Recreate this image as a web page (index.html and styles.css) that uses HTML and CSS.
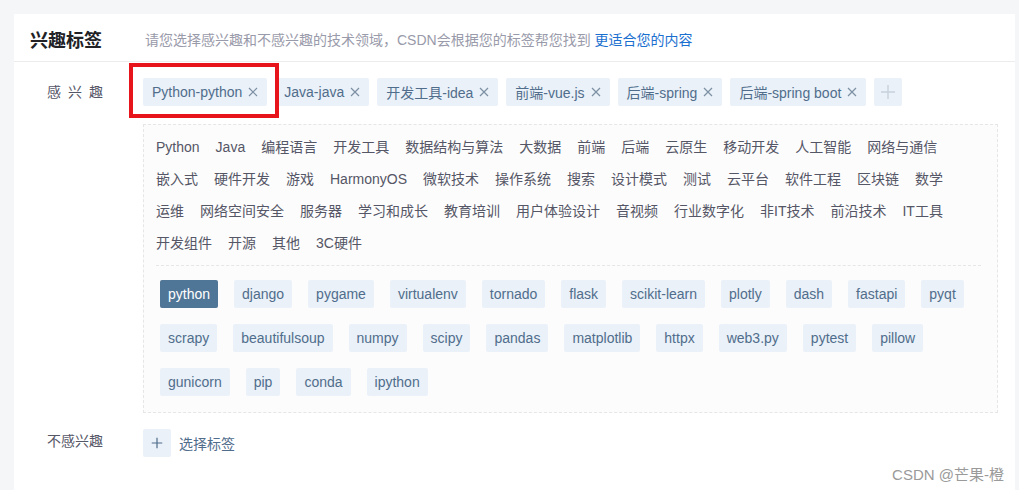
FILE: index.html
```html
<!DOCTYPE html>
<html lang="zh-CN">
<head>
    <meta charset="UTF-8">
    <meta name="viewport" content="width=device-width, initial-scale=1.0">
    <title>兴趣标签</title>
    <link rel="stylesheet" href="styles.css">
</head>
<body>
    <div class="card">
        <div class="card-header">
            <h2>兴趣标签</h2>
            <p class="desc">请您选择感兴趣和不感兴趣的技术领域，CSDN会根据您的标签帮您找到 <a href="#">更适合您的内容</a></p>
        </div>

        <div class="tag-row">
            <div class="row-label spaced">感兴趣</div>
            <div class="row-body">
                <div class="chosen-tags">
                    <span class="tag marked">Python-python <svg class="close" viewBox="0 0 10 10"><path d="M1 1L9 9M9 1L1 9"/></svg></span>
                    <span class="tag">Java-java <svg class="close" viewBox="0 0 10 10"><path d="M1 1L9 9M9 1L1 9"/></svg></span>
                    <span class="tag">开发工具-idea <svg class="close" viewBox="0 0 10 10"><path d="M1 1L9 9M9 1L1 9"/></svg></span>
                    <span class="tag">前端-vue.js <svg class="close" viewBox="0 0 10 10"><path d="M1 1L9 9M9 1L1 9"/></svg></span>
                    <span class="tag">后端-spring <svg class="close" viewBox="0 0 10 10"><path d="M1 1L9 9M9 1L1 9"/></svg></span>
                    <span class="tag">后端-spring boot <svg class="close" viewBox="0 0 10 10"><path d="M1 1L9 9M9 1L1 9"/></svg></span>
                    <span class="tag add-tag"><svg viewBox="0 0 16 16"><path d="M8 1V15M1 8H15"/></svg></span>
                </div>

                <div class="picker">
                    <div class="categories">
                        <span>Python</span><span>Java</span><span>编程语言</span><span>开发工具</span><span>数据结构与算法</span><span>大数据</span><span>前端</span><span>后端</span><span>云原生</span><span>移动开发</span><span>人工智能</span><span>网络与通信</span>
                        <span>嵌入式</span><span>硬件开发</span><span>游戏</span><span>HarmonyOS</span><span>微软技术</span><span>操作系统</span><span>搜索</span><span>设计模式</span><span>测试</span><span>云平台</span><span>软件工程</span><span>区块链</span><span>数学</span>
                        <span>运维</span><span>网络空间安全</span><span>服务器</span><span>学习和成长</span><span>教育培训</span><span>用户体验设计</span><span>音视频</span><span>行业数字化</span><span>非IT技术</span><span>前沿技术</span><span>IT工具</span>
                        <span>开发组件</span><span>开源</span><span>其他</span><span>3C硬件</span>
                    </div>
                    <div class="sub-tags">
                        <span class="sub active">python</span>
                        <span class="sub">django</span>
                        <span class="sub">pygame</span>
                        <span class="sub">virtualenv</span>
                        <span class="sub">tornado</span>
                        <span class="sub">flask</span>
                        <span class="sub">scikit-learn</span>
                        <span class="sub">plotly</span>
                        <span class="sub">dash</span>
                        <span class="sub">fastapi</span>
                        <span class="sub">pyqt</span>
                        <span class="sub">scrapy</span>
                        <span class="sub">beautifulsoup</span>
                        <span class="sub">numpy</span>
                        <span class="sub">scipy</span>
                        <span class="sub">pandas</span>
                        <span class="sub">matplotlib</span>
                        <span class="sub">httpx</span>
                        <span class="sub">web3.py</span>
                        <span class="sub">pytest</span>
                        <span class="sub">pillow</span>
                        <span class="sub">gunicorn</span>
                        <span class="sub">pip</span>
                        <span class="sub">conda</span>
                        <span class="sub">ipython</span>
                    </div>
                </div>
            </div>
        </div>

        <div class="tag-row dislike-row">
            <div class="row-label">不感兴趣</div>
            <div class="row-body">
                <a href="#" class="pick-link">
                    <span class="tag add-tag dark"><svg viewBox="0 0 16 16"><path d="M8 2V14M2 8H14"/></svg></span>
                    选择标签
                </a>
            </div>
        </div>

        <div class="watermark">CSDN @芒果-橙</div>
    </div>
</body>
</html>
```

FILE: styles.css
```css
body {
    margin: 0;
    padding: 14px 4px 0 14px;
    background-color: #f5f6f7;
    font-family: "Liberation Sans", "Noto Sans CJK SC", sans-serif;
    font-size: 14px;
    color: #555666;
}

.card {
    position: relative;
    background: white;
    height: 476px;
}

.card-header {
    display: flex;
    align-items: center;
    height: 44px;
    padding: 3px 16px 0;
    border-bottom: 1px solid #ececec;
}

.card-header h2 {
    margin: 0;
    font-size: 18px;
    font-weight: bold;
    color: #222226;
}

.desc {
    margin: 0 0 0 43px;
    color: #999aaa;
}

.desc a {
    color: #1a6fd0;
    text-decoration: none;
}

.tag-row {
    display: flex;
    padding: 16px 17px 0 33px;
}

.row-label {
    width: 56px;
    margin-right: 40px;
    line-height: 28px;
    color: #555666;
    white-space: nowrap;
}

.row-label.spaced {
    letter-spacing: 7px;
}

.row-body {
    flex: 1;
}

.chosen-tags {
    display: flex;
    gap: 8px;
}

.tag {
    display: inline-flex;
    align-items: center;
    gap: 6px;
    height: 28px;
    padding: 0 9px;
    background-color: #eaf1f8;
    border-radius: 2px;
    color: #506d8c;
    white-space: nowrap;
}

.tag .close {
    width: 10px;
    height: 10px;
    fill: none;
    stroke: #7d8fa3;
    stroke-width: 1.2;
}

.tag.marked {
    position: relative;
}

/* red annotation box */
.tag.marked::after {
    content: "";
    position: absolute;
    left: -14px;
    right: -12px;
    top: -15px;
    bottom: -12px;
    border: 4px solid #e8141b;
}

.add-tag {
    width: 28px;
    padding: 0;
    justify-content: center;
}

.add-tag svg {
    width: 16px;
    height: 16px;
    fill: none;
    stroke: #c8d1db;
    stroke-width: 1.4;
}

.picker {
    margin-top: 18px;
    padding: 6px 16px 16px;
    background-color: #fcfcfc;
    border: 1px dashed #e6e6e6;
}

.categories {
    display: flex;
    flex-wrap: wrap;
    column-gap: 16px;
    line-height: 32px;
    margin: 0 0 0 -4px;
    padding: 0 0 6px 0;
    border-bottom: 1px dashed #e6e6e6;
}

.categories span {
    color: #555666;
    cursor: pointer;
}

.sub-tags {
    display: flex;
    flex-wrap: wrap;
    gap: 16px;
    margin-top: 14px;
}

.sub {
    height: 28px;
    line-height: 28px;
    padding: 0 8px;
    background-color: #eaf1f8;
    border-radius: 2px;
    color: #506d8c;
    cursor: pointer;
}

.sub.active {
    background-color: #4f7597;
    color: white;
}

.dislike-row {
    padding-top: 16px;
}

.dislike-row .row-label {
    line-height: 24px;
}

.pick-link {
    display: inline-flex;
    align-items: center;
    gap: 8px;
    color: #506d8c;
    text-decoration: none;
}

.add-tag.dark svg {
    width: 14px;
    height: 14px;
    stroke: #506d8c;
    stroke-width: 1.4;
}

.watermark {
    position: absolute;
    right: 11px;
    top: 449px;
    font-size: 15px;
    color: #9a9a9a;
}
```
